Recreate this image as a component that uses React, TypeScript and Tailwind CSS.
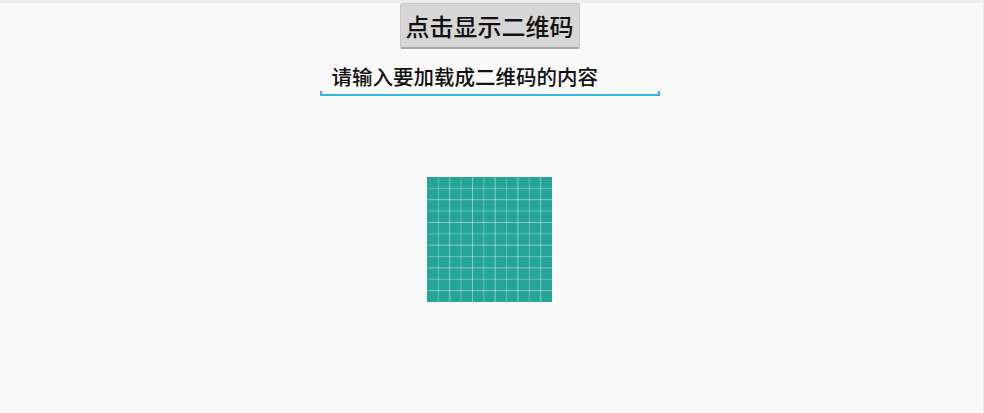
import React from "react";

function Grid() {
  const n = 11;
  const size = 125;
  const step = size / n;
  const lines = [];
  for (let i = 1; i < n; i++) {
    const p = i * step;
    const op = i % 2 === 0 ? 0.45 : 0.3;
    lines.push(<line key={"v" + i} x1={p} y1={0} x2={p} y2={size} stroke="#ffffff" strokeOpacity={op} strokeWidth={1} />);
    lines.push(<line key={"h" + i} x1={0} y1={p} x2={size} y2={p} stroke="#ffffff" strokeOpacity={op} strokeWidth={1} />);
  }
  return (
    <svg width={size} height={size} viewBox={`0 0 ${size} ${size}`} className="block">
      <rect x={0} y={0} width={size} height={size} fill="#24a597" />
      {lines}
    </svg>
  );
}

export default function App() {
  return (
    <div
      className="w-[984px] h-[413px] bg-[#f9f9f9] flex flex-col items-center border-t-[3px] border-t-[#ececec] border-r border-r-[#ececec] pr-[4px] overflow-hidden"
      style={{ fontFamily: '"Noto Sans CJK SC", "Noto Sans", sans-serif' }}
    >
      <button className="w-[180px] h-[46px] bg-[#d6d6d6] border border-[#c8c8c8] border-b-2 border-b-[#a9a9a9] rounded-[2px] text-[24px] font-medium leading-none text-[#111] flex items-center justify-center pt-[1px]">
        点击显示二维码
      </button>
      <div className="mt-[13px] w-[340px] h-[34px] flex items-end">
        <div className="w-[2px] h-[5px] bg-[#33b5e5]" />
        <div className="flex-1 h-[34px] border-b-2 border-b-[#33b5e5] pt-[4px] pl-[10px] text-[20.5px] font-medium leading-none text-[#111] whitespace-nowrap">
          请输入要加载成二维码的内容
        </div>
        <div className="w-[2px] h-[5px] bg-[#33b5e5]" />
      </div>
      <div className="mt-[81px]">
        <Grid />
      </div>
    </div>
  );
}
